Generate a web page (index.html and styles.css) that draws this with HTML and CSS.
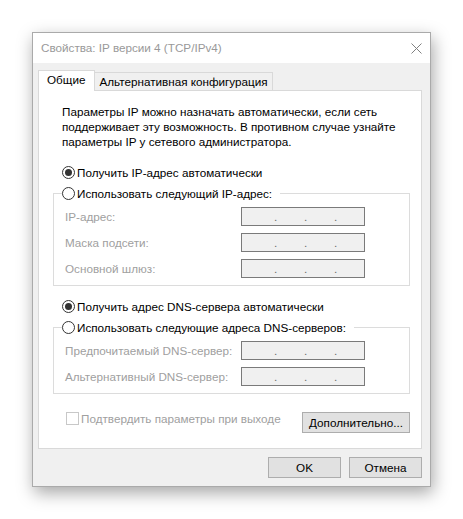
FILE: index.html
```html
<!DOCTYPE html>
<html lang="ru">
<head>
    <meta charset="UTF-8">
    <title>Свойства: IP версии 4 (TCP/IPv4)</title>
    <link rel="stylesheet" href="styles.css">
</head>
<body>
    <div class="window">
        <div class="titlebar">
            <span class="title">Свойства: IP версии 4 (TCP/IPv4)</span>
            <svg class="close" width="11" height="11" viewBox="0 0 11 11">
                <path d="M0.5 0.5 L10.5 10.5 M10.5 0.5 L0.5 10.5" stroke="#808080" stroke-width="1" fill="none"/>
            </svg>
        </div>
        <div class="body">
            <div class="tabs">
                <div class="tab active">Общие</div>
                <div class="tab">Альтернативная конфигурация</div>
            </div>
            <div class="panel">
                <p class="intro">Параметры IP можно назначать автоматически, если сеть<br>поддерживает эту возможность. В противном случае узнайте<br>параметры IP у сетевого администратора.</p>

                <div class="radio-row first">
                    <span class="radio checked"></span>Получить IP-адрес автоматически
                </div>
                <fieldset class="group">
                    <legend class="radio-row"><span class="radio"></span>Использовать следующий IP-адрес:</legend>
                    <div class="field-row"><span class="label">IP-адрес:</span><span class="ip"><i>.</i><i>.</i><i>.</i></span></div>
                    <div class="field-row"><span class="label">Маска подсети:</span><span class="ip"><i>.</i><i>.</i><i>.</i></span></div>
                    <div class="field-row"><span class="label">Основной шлюз:</span><span class="ip"><i>.</i><i>.</i><i>.</i></span></div>
                </fieldset>

                <div class="radio-row second">
                    <span class="radio checked"></span>Получить адрес DNS-сервера автоматически
                </div>
                <fieldset class="group">
                    <legend class="radio-row"><span class="radio"></span>Использовать следующие адреса DNS-серверов:</legend>
                    <div class="field-row"><span class="label">Предпочитаемый DNS-сервер:</span><span class="ip"><i>.</i><i>.</i><i>.</i></span></div>
                    <div class="field-row"><span class="label">Альтернативный DNS-сервер:</span><span class="ip"><i>.</i><i>.</i><i>.</i></span></div>
                </fieldset>

                <div class="footer">
                    <label class="check"><span class="box"></span>Подтвердить параметры при выходе</label>
                    <button class="btn more">Дополнительно...</button>
                </div>
            </div>
            <div class="actions">
                <button class="btn">OK</button>
                <button class="btn">Отмена</button>
            </div>
        </div>
    </div>
</body>
</html>
```

FILE: styles.css
```css
body {
    margin: 0;
    padding: 32px;
    background-color: #ffffff;
    font-family: "Liberation Sans", Arial, sans-serif;
    font-size: 11.7px;
    color: #000000;
}

.window {
    width: 397px;
    border: 1px solid #aaaaaa;
    background-color: #f0f0f0;
    box-shadow: 2px 6px 16px rgba(0, 0, 0, 0.35);
}

.titlebar {
    height: 30px;
    background-color: #ffffff;
    display: flex;
    align-items: center;
    justify-content: space-between;
    padding: 0 8px;
}

.title {
    color: #999999;
    line-height: 14px;
}

.close {
    display: block;
}

.body {
    padding: 7px 8px 8px 5px;
}

/* вкладки */
.tabs {
    display: flex;
    align-items: flex-start;
}

.tab {
    height: 17px;
    line-height: 17px;
    margin-top: 2px;
    padding: 0 4px;
    border: 1px solid #d9d9d9;
    border-bottom: none;
    border-left: none;
    background-color: #f0f0f0;
}

.tab.active {
    height: 20px;
    margin-top: 0;
    margin-bottom: -1px;
    padding: 0 9px 0 8px;
    border-left: 1px solid #d9d9d9;
    background-color: #ffffff;
    position: relative;
    z-index: 1;
}

.panel {
    width: 384px;
    height: 359px;
    box-sizing: border-box;
    border: 1px solid #d9d9d9;
    background-color: #ffffff;
    padding: 0 11px 0 14px;
}

.intro {
    margin: 13px 0 0 9px;
    line-height: 15px;
}

.radio-row {
    display: flex;
    align-items: center;
    height: 15px;
    line-height: 15px;
    white-space: nowrap;
}

.radio-row.first {
    margin: 16px 0 0 9px;
}

.radio-row.second {
    margin: 13px 0 0 9px;
}

.radio {
    width: 11px;
    height: 11px;
    border: 1px solid #333333;
    border-radius: 50%;
    margin-right: 2px;
    display: flex;
    align-items: center;
    justify-content: center;
    flex-shrink: 0;
}

.radio.checked::after {
    content: "";
    width: 7px;
    height: 7px;
    border-radius: 50%;
    background-color: #333333;
}

/* группы полей */
.group {
    min-width: 0;
    margin: 6px 0 0 0;
    padding: 6px 0 7px 11px;
    border: 1px solid #dcdcdc;
    display: flex;
    flex-direction: column;
    gap: 7px;
}

.group legend {
    padding: 0 8px 0 0;
    margin-left: -3px;
}

.field-row {
    display: flex;
    align-items: center;
    justify-content: space-between;
    height: 19px;
    margin-right: 44px;
}

.label {
    color: #a0a0a0;
}

.ip {
    width: 124px;
    height: 19px;
    box-sizing: border-box;
    border: 1px solid #7a7a7a;
    background-color: #f0f0f0;
    display: flex;
    padding-left: 32px;
}

.ip i {
    font-style: normal;
    width: 30px;
    line-height: 17px;
    color: #6d6d6d;
}

.footer {
    margin-top: 18px;
    display: flex;
    justify-content: space-between;
    align-items: flex-start;
}

.check {
    display: flex;
    align-items: center;
    height: 13px;
    margin-left: 13px;
    color: #a0a0a0;
}

.box {
    width: 11px;
    height: 11px;
    border: 1px solid #c8c8c8;
    margin-right: 2px;
}

.btn {
    height: 21px;
    width: 73px;
    padding: 0;
    font-family: inherit;
    font-size: 11.7px;
    color: #000000;
    background-color: #e1e1e1;
    border: 1px solid #adadad;
    border-radius: 0;
}

.btn.more {
    width: 108px;
}

.actions {
    margin-top: 8px;
    display: flex;
    justify-content: flex-end;
    gap: 8px;
}
```
